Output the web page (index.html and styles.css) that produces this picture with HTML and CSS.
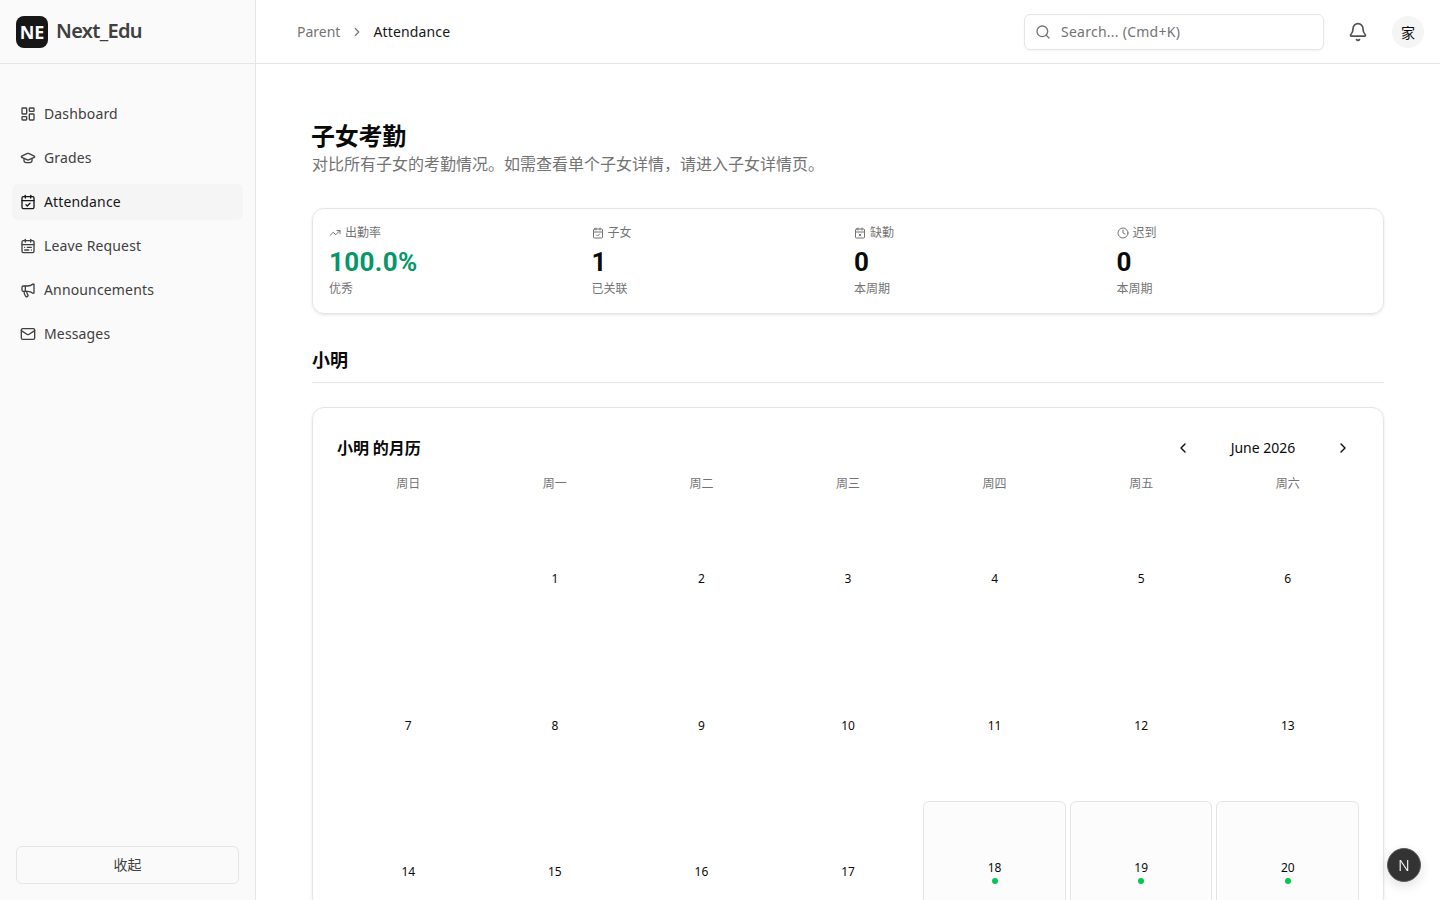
FILE: index.html
```html
<!DOCTYPE html>
<html lang="zh-CN">
<head>
    <meta charset="UTF-8">
    <meta name="viewport" content="width=device-width, initial-scale=1.0">
    <title>Next_Edu - Attendance</title>
    <link rel="stylesheet" href="styles.css">
</head>
<body>
    <!-- Icon sprite -->
    <svg class="sprite" xmlns="http://www.w3.org/2000/svg">
        <symbol id="i-dashboard" viewBox="0 0 24 24"><rect width="7" height="9" x="3" y="3" rx="1"/><rect width="7" height="5" x="14" y="3" rx="1"/><rect width="7" height="9" x="14" y="12" rx="1"/><rect width="7" height="5" x="3" y="16" rx="1"/></symbol>
        <symbol id="i-grades" viewBox="0 0 24 24"><path d="M21.42 10.922a1 1 0 0 0-.019-1.838L12.83 5.18a2 2 0 0 0-1.66 0L2.6 9.08a1 1 0 0 0 0 1.832l8.57 3.908a2 2 0 0 0 1.66 0z"/><path d="M6 12.5V16a6 3 0 0 0 12 0v-3.5"/></symbol>
        <symbol id="i-cal-check" viewBox="0 0 24 24"><path d="M8 2v4"/><path d="M16 2v4"/><rect width="18" height="18" x="3" y="4" rx="2"/><path d="M3 10h18"/><path d="m9 16 2 2 4-4"/></symbol>
        <symbol id="i-cal-range" viewBox="0 0 24 24"><rect width="18" height="18" x="3" y="4" rx="2"/><path d="M16 2v4"/><path d="M3 10h18"/><path d="M8 2v4"/><path d="M17 14h-6"/><path d="M13 18H7"/><path d="M7 14h.01"/><path d="M17 18h.01"/></symbol>
        <symbol id="i-cal-x" viewBox="0 0 24 24"><path d="M8 2v4"/><path d="M16 2v4"/><rect width="18" height="18" x="3" y="4" rx="2"/><path d="M3 10h18"/><path d="m14 14-4 4"/><path d="m10 14 4 4"/></symbol>
        <symbol id="i-megaphone" viewBox="0 0 24 24"><path d="M11 6a13 13 0 0 0 8.4-2.8A1 1 0 0 1 21 4v12a1 1 0 0 1-1.6.8A13 13 0 0 0 11 14H5a2 2 0 0 1-2-2V8a2 2 0 0 1 2-2z"/><path d="M6 14a12 12 0 0 0 2.4 7.2 2 2 0 0 0 3.2-2.4A8 8 0 0 1 10 14"/><path d="M8 6v8"/></symbol>
        <symbol id="i-mail" viewBox="0 0 24 24"><rect width="20" height="16" x="2" y="4" rx="2"/><path d="m22 7-8.97 5.7a1.94 1.94 0 0 1-2.06 0L2 7"/></symbol>
        <symbol id="i-search" viewBox="0 0 24 24"><path d="m21 21-4.34-4.34"/><circle cx="11" cy="11" r="8"/></symbol>
        <symbol id="i-bell" viewBox="0 0 24 24"><path d="M10.268 21a2 2 0 0 0 3.464 0"/><path d="M3.262 15.326A1 1 0 0 0 4 17h16a1 1 0 0 0 .74-1.673C19.41 13.956 18 12.499 18 8A6 6 0 0 0 6 8c0 4.499-1.411 5.956-2.738 7.326"/></symbol>
        <symbol id="i-trend" viewBox="0 0 24 24"><path d="M16 7h6v6"/><path d="m22 7-8.5 8.5-5-5L2 17"/></symbol>
        <symbol id="i-clock" viewBox="0 0 24 24"><circle cx="12" cy="12" r="10"/><path d="M12 6v6l4 2"/></symbol>
        <symbol id="i-left" viewBox="0 0 24 24"><path d="m15 18-6-6 6-6"/></symbol>
        <symbol id="i-right" viewBox="0 0 24 24"><path d="m9 18 6-6-6-6"/></symbol>
    </svg>

    <div class="app">
        <aside class="sidebar">
            <div class="brand">
                <div class="brand-logo">NE</div>
                <div class="brand-name">Next_Edu</div>
            </div>
            <nav class="nav">
                <a class="nav-item"><svg class="icon"><use href="#i-dashboard"/></svg><span>Dashboard</span></a>
                <a class="nav-item"><svg class="icon"><use href="#i-grades"/></svg><span>Grades</span></a>
                <a class="nav-item active"><svg class="icon"><use href="#i-cal-check"/></svg><span>Attendance</span></a>
                <a class="nav-item"><svg class="icon"><use href="#i-cal-range"/></svg><span>Leave Request</span></a>
                <a class="nav-item"><svg class="icon"><use href="#i-megaphone"/></svg><span>Announcements</span></a>
                <a class="nav-item"><svg class="icon"><use href="#i-mail"/></svg><span>Messages</span></a>
            </nav>
            <div class="sidebar-foot">
                <button class="collapse-btn">收起</button>
            </div>
        </aside>

        <div class="content">
            <header class="topbar">
                <div class="crumbs">
                    <span>Parent</span>
                    <svg class="icon crumb-sep"><use href="#i-right"/></svg>
                    <span class="crumb-current">Attendance</span>
                </div>
                <div class="topbar-right">
                    <div class="search">
                        <svg class="icon"><use href="#i-search"/></svg>
                        <span>Search... (Cmd+K)</span>
                    </div>
                    <svg class="icon bell"><use href="#i-bell"/></svg>
                    <div class="avatar">家</div>
                </div>
            </header>

            <main class="main">
                <h1 class="page-title">子女考勤</h1>
                <p class="page-sub">对比所有子女的考勤情况。如需查看单个子女详情，请进入子女详情页。</p>

                <section class="stats">
                    <div class="stat">
                        <div class="stat-label"><svg class="icon"><use href="#i-trend"/></svg>出勤率</div>
                        <div class="stat-value good">100.0%</div>
                        <div class="stat-note">优秀</div>
                    </div>
                    <div class="stat">
                        <div class="stat-label"><svg class="icon"><use href="#i-cal-check"/></svg>子女</div>
                        <div class="stat-value">1</div>
                        <div class="stat-note">已关联</div>
                    </div>
                    <div class="stat">
                        <div class="stat-label"><svg class="icon"><use href="#i-cal-x"/></svg>缺勤</div>
                        <div class="stat-value">0</div>
                        <div class="stat-note">本周期</div>
                    </div>
                    <div class="stat">
                        <div class="stat-label"><svg class="icon"><use href="#i-clock"/></svg>迟到</div>
                        <div class="stat-value">0</div>
                        <div class="stat-note">本周期</div>
                    </div>
                </section>

                <h2 class="child-name">小明</h2>

                <section class="calendar">
                    <div class="cal-head">
                        <h3 class="cal-title">小明 的月历</h3>
                        <div class="cal-nav">
                            <svg class="icon"><use href="#i-left"/></svg>
                            <span class="cal-month">June 2026</span>
                            <svg class="icon"><use href="#i-right"/></svg>
                        </div>
                    </div>
                    <div class="cal-weekdays">
                        <div>周日</div><div>周一</div><div>周二</div><div>周三</div><div>周四</div><div>周五</div><div>周六</div>
                    </div>
                    <div class="cal-grid">
                        <div class="day"></div>
                        <div class="day">1</div><div class="day">2</div><div class="day">3</div><div class="day">4</div><div class="day">5</div><div class="day">6</div>
                        <div class="day">7</div><div class="day">8</div><div class="day">9</div><div class="day">10</div><div class="day">11</div><div class="day">12</div><div class="day">13</div>
                        <div class="day">14</div><div class="day">15</div><div class="day">16</div><div class="day">17</div>
                        <div class="day marked">18<span class="dot"></span></div>
                        <div class="day marked">19<span class="dot"></span></div>
                        <div class="day marked">20<span class="dot"></span></div>
                    </div>
                </section>
            </main>
        </div>
    </div>

    <div class="dev-badge">N</div>
</body>
</html>
```

FILE: styles.css
```css
* {
    box-sizing: border-box;
}
html, body {
    margin: 0;
    height: 100%;
    overflow: hidden;
}
body {
    font-family: "Noto Sans", "Noto Sans CJK SC", sans-serif;
    font-size: 14px;
    color: #0a0a0a;
    background: #fff;
}
.sprite {
    display: none;
}
.icon {
    width: 16px;
    height: 16px;
    flex: none;
    fill: none;
    stroke: currentColor;
    stroke-width: 2;
    stroke-linecap: round;
    stroke-linejoin: round;
}
.app {
    display: flex;
    height: 100vh;
}

/* Sidebar */
.sidebar {
    width: 256px;
    flex: none;
    display: flex;
    flex-direction: column;
    background: #fafafa;
    border-right: 1px solid #e5e5e5;
}
.brand {
    height: 64px;
    flex: none;
    display: flex;
    align-items: center;
    gap: 8px;
    padding: 0 16px;
    border-bottom: 1px solid #e5e5e5;
}
.brand-logo {
    width: 32px;
    height: 32px;
    display: flex;
    align-items: center;
    justify-content: center;
    border-radius: 8px;
    background: #171717;
    color: #fff;
    font-size: 18px;
    font-weight: 700;
}
.brand-name {
    margin-bottom: 2px;
    font-size: 20px;
    font-weight: 600;
    letter-spacing: -0.7px;
    color: #404040;
}
.nav {
    flex: 1;
    display: flex;
    flex-direction: column;
    gap: 8px;
    padding: 32px 12px 0;
}
.nav-item {
    height: 36px;
    display: flex;
    align-items: center;
    gap: 8px;
    padding: 0 8px;
    border-radius: 6px;
    color: #404040;
}
.nav-item span {
    margin-bottom: 2px;
    letter-spacing: 0.15px;
}
.nav-item.active {
    background: #f5f5f5;
    color: #171717;
}
.sidebar-foot {
    padding: 0 16px 16px;
}
.collapse-btn {
    width: 100%;
    height: 38px;
    padding: 0 0 2px;
    border: 1px solid #e5e5e5;
    border-radius: 6px;
    background: transparent;
    color: #404040;
    font: inherit;
}

/* Top bar */
.content {
    flex: 1;
    min-width: 0;
    display: flex;
    flex-direction: column;
}
.topbar {
    height: 64px;
    flex: none;
    display: flex;
    align-items: center;
    justify-content: space-between;
    padding: 0 16px 0 41px;
    border-bottom: 1px solid #e5e5e5;
}
.crumbs {
    display: flex;
    align-items: center;
    gap: 10px;
    color: #737373;
}
.crumb-sep {
    width: 14px;
    height: 14px;
}
.crumb-current {
    margin-left: -1px;
    letter-spacing: 0.15px;
    color: #171717;
}
.topbar-right {
    display: flex;
    align-items: center;
}
.search {
    width: 300px;
    height: 36px;
    display: flex;
    align-items: center;
    gap: 10px;
    padding: 0 10px;
    border: 1px solid #e5e5e5;
    border-radius: 6px;
    color: #737373;
    letter-spacing: 0.25px;
    box-shadow: 0 1px 2px rgba(0, 0, 0, 0.05);
}
.bell {
    width: 20px;
    height: 20px;
    margin: 0 24px;
    color: #525252;
}
.avatar {
    width: 32px;
    height: 32px;
    display: flex;
    align-items: center;
    justify-content: center;
    border-radius: 50%;
    background: #f5f5f5;
}

/* Main */
.main {
    flex: 1;
    min-height: 0;
    overflow: hidden;
    padding: 56px 56px 0;
}
.page-title {
    margin: 0 0 0 -1px;
    font-size: 24px;
    line-height: 32px;
    font-weight: 700;
    letter-spacing: -0.25px;
}
.page-sub {
    margin: 0 0 32px;
    font-size: 16px;
    line-height: 24px;
    color: #737373;
}
.stats {
    display: grid;
    grid-template-columns: repeat(4, 1fr);
    gap: 12px;
    padding: 16px;
    border: 1px solid #e5e5e5;
    border-radius: 12px;
    box-shadow: 0 1px 3px rgba(0, 0, 0, 0.1);
}
.stat-label {
    display: flex;
    align-items: center;
    gap: 4px;
    font-size: 12px;
    line-height: 16px;
    color: #737373;
}
.stat-label .icon {
    width: 12px;
    height: 12px;
}
.stat-value {
    margin-top: 5px;
    font-family: Roboto, "Noto Sans", sans-serif;
    font-size: 26px;
    line-height: 32px;
    font-weight: 700;
    letter-spacing: 0.35px;
}
.stat-value.good {
    color: #059669;
}
.stat-note {
    margin-top: 3px;
    font-size: 12px;
    line-height: 16px;
    color: #737373;
}
.child-name {
    margin: 32px 0 0;
    padding-bottom: 8px;
    font-size: 18px;
    line-height: 28px;
    font-weight: 600;
    border-bottom: 1px solid #e5e5e5;
}

/* Calendar */
.calendar {
    margin-top: 24px;
    padding: 24px;
    border: 1px solid #e5e5e5;
    border-radius: 12px;
    box-shadow: 0 1px 3px rgba(0, 0, 0, 0.1);
}
.cal-head {
    display: flex;
    align-items: center;
    justify-content: space-between;
    height: 32px;
}
.cal-title {
    margin: 0 0 2px;
    font-size: 16px;
    font-weight: 600;
    letter-spacing: -0.1px;
}
.cal-nav {
    display: flex;
    align-items: center;
    gap: 0;
    padding-right: 8px;
}
.cal-month {
    width: 144px;
    margin-bottom: 2px;
    text-align: center;
}
.cal-weekdays {
    display: grid;
    grid-template-columns: repeat(7, 1fr);
    gap: 4px;
    margin-top: 12px;
    text-align: center;
    font-size: 12px;
    line-height: 16px;
    color: #737373;
}
.cal-grid {
    display: grid;
    grid-template-columns: repeat(7, 1fr);
    gap: 4px;
    margin-top: 16px;
}
.day {
    aspect-ratio: 1;
    display: flex;
    flex-direction: column;
    align-items: center;
    justify-content: center;
    gap: 2px;
    border: 1px solid transparent;
    border-radius: 6px;
    font-size: 12px;
    line-height: 16px;
}
.day.marked {
    background: #fcfcfc;
    border-color: #e5e5e5;
}
.dot {
    width: 6px;
    height: 6px;
    border-radius: 50%;
    background: #00c950;
}

/* Dev indicator */
.dev-badge {
    position: fixed;
    left: 1387px;
    top: 848px;
    width: 34px;
    height: 34px;
    display: flex;
    align-items: center;
    justify-content: center;
    border-radius: 50%;
    background: #333;
    border: 1.5px solid #5c5c5c;
    color: #fff;
    font-family: Inter, sans-serif;
    font-size: 15px;
    font-weight: 300;
    box-shadow: 0 4px 12px rgba(0, 0, 0, 0.12);
}
```
